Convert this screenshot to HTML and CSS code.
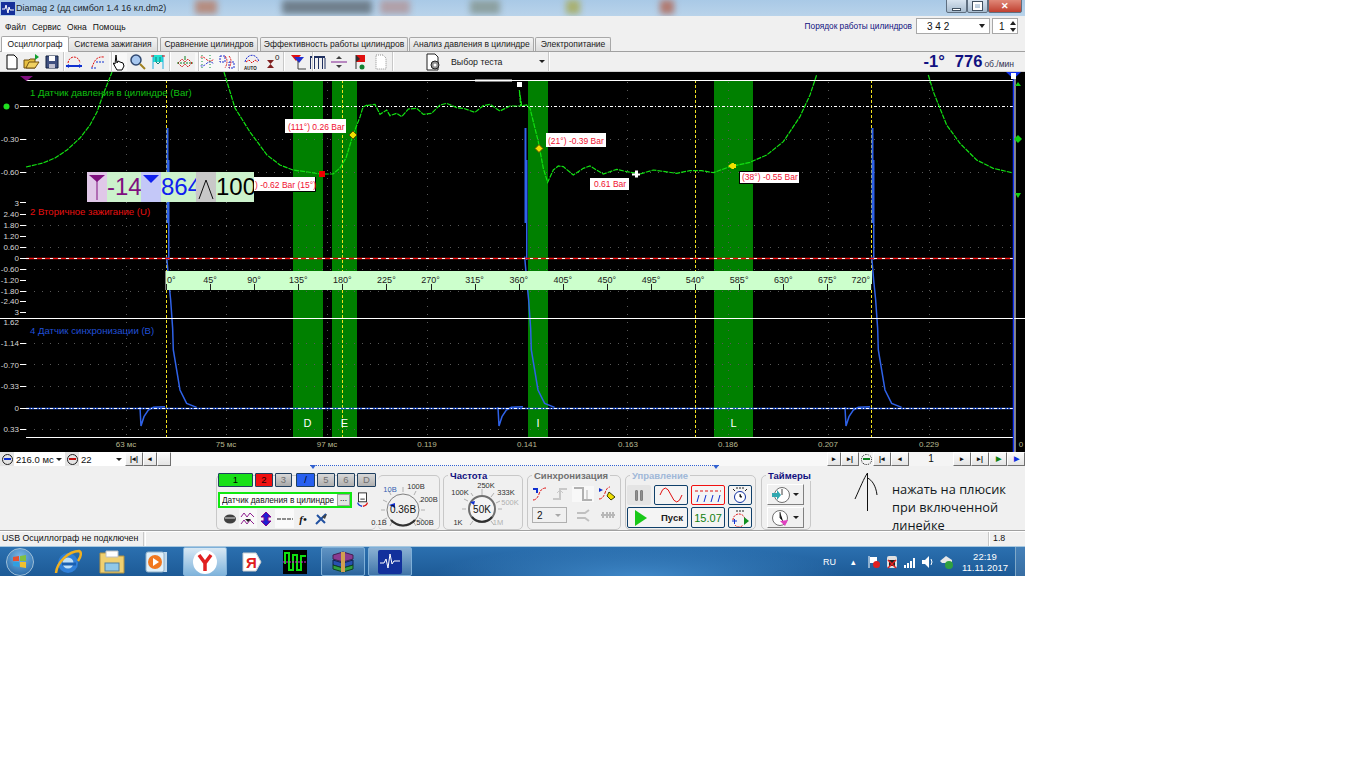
FILE: index.html
```html
<!DOCTYPE html>
<html lang="ru">
<head>
<meta charset="utf-8">
<title>Diamag 2</title>
<link rel="stylesheet" href="styles.css">
</head>
<body>
<div class="app">
  <header class="titlebar">
    <span class="blob b1"></span><span class="blob b2"></span><span class="blob b3"></span><span class="blob b4"></span><span class="blob b5"></span><span class="blob b6"></span>
    <svg class="appicon" width="14" height="13" viewBox="0 0 14 13"><rect width="14" height="13" fill="#14309a"/><path d="M1 7h3l1-4 2 8 1-6 1 3h4" fill="none" stroke="#fff"/></svg>
    <span class="title">Diamag 2 (дд симбол 1.4 16 кл.dm2)</span>
    <div class="winbtns">
      <span class="wb"><i class="wmin"></i></span><span class="wb"><i class="wmax"></i></span><span class="wb wclose">✕</span>
    </div>
  </header>

  <div class="menubar">
    <nav class="menu"><span>Файл</span><span>Сервис</span><span>Окна</span><span>Помощь</span></nav>
    <div class="order">
      <span class="orderlabel">Порядок работы цилиндров</span>
      <span class="combo"><span>3 4 2</span><i class="caret"></i></span>
      <span class="spin"><span>1</span><i class="spinarrows"></i></span>
    </div>
  </div>

  <div class="tabs">
    <span class="tab active">Осциллограф</span>
    <span class="tab t2">Система зажигания</span>
    <span class="tab t3">Сравнение цилиндров</span>
    <span class="tab t4">Эффективность работы цилиндров</span>
    <span class="tab t5">Анализ давления в цилиндре</span>
    <span class="tab t6">Электропитание</span>
  </div>

  <div class="toolbar">
    <div class="tg w20">
      <svg class="ic" viewBox="0 0 18 18"><path d="M4 2h7l3 3v11H4z" fill="#fff" stroke="#000"/></svg>
      <svg class="ic" viewBox="0 0 18 18"><path d="M1 7h5l1-1h5v9H1z" fill="#e8c040" stroke="#705010"/><path d="M3 15l3-6h10l-4 6z" fill="#f0d060" stroke="#705010"/><path d="M12 1l4 3-4 3z" fill="#10a030"/></svg>
      <svg class="ic" viewBox="0 0 18 18"><path d="M3 3h12v12H3z" fill="#405080" stroke="#102040"/><rect x="6" y="3" width="6" height="5" fill="#fff"/><rect x="6" y="11" width="6" height="4" fill="#c0c0d0"/></svg>
    </div>
    <i class="sep"></i>
    <div class="tg w24 ml-3">
      <svg class="ic" viewBox="0 0 18 18"><path d="M3 10C4 2 14 2 15 10" fill="none" stroke="#e01010" stroke-dasharray="2 1"/><path d="M1 13h16" stroke="#1030d0" stroke-width="2"/><path d="M1 13l3-2v4zM17 13l-3-2v4z" fill="#1030d0"/></svg>
      <svg class="ic" viewBox="0 0 18 18"><path d="M3 14C5 10 6 3 15 4" fill="none" stroke="#e01010" stroke-dasharray="2 1"/><path d="M7 9h9" stroke="#1030d0" stroke-dasharray="2 1"/><path d="M2 15h6" stroke="#1030d0" stroke-dasharray="2 1"/></svg>
    </div>
    <i class="sep"></i>
    <div class="tg w20 ml-5">
      <svg class="ic dith" viewBox="0 0 18 18"><path d="M7 2l1 8 1-2 2 1 3 1 1 3-2 4H8L4 10l2 1z" fill="#fff" stroke="#000"/></svg>
      <svg class="ic" viewBox="0 0 18 18"><circle cx="7" cy="7" r="5" fill="#a8c8f0" stroke="#304870" stroke-width="1.5"/><path d="M11 11l5 5" stroke="#a08020" stroke-width="2"/></svg>
      <svg class="ic" viewBox="0 0 18 18"><rect x="4" y="2" width="10" height="7" fill="#20e0d0"/><path d="M4 2v14M14 2v14" stroke="#20b0e0"/><path d="M2 3h3M13 3h3" stroke="#e01010"/><path d="M7 4v5l2 2 2-2V4" stroke="#108080" fill="none"/></svg>
    </div>
    <i class="sep"></i>
    <div class="tg w24 ml2">
      <svg class="ic" viewBox="0 0 18 18"><path d="M2 10l4-4 3 3 3-3 4 4M2 10l4 4 3-3 3 3 4-4" fill="none" stroke="#d02020" stroke-dasharray="2 1"/><path d="M1 10h16" stroke="#108020" stroke-dasharray="2 1"/><path d="M9 3v4" stroke="#108020"/></svg>
    </div>
    <i class="sep"></i>
    <div class="tg w21 dith ml-5">
      <svg class="ic" viewBox="0 0 18 18"><path d="M1 6q4-4 8 0t8 0" fill="none" stroke="#e01010" stroke-dasharray="2 1"/><path d="M1 11q4 4 8 0t8 0" fill="none" stroke="#2030d0" stroke-dasharray="2 1"/><path d="M5 2v14M13 2v14" stroke="#109040" stroke-dasharray="1 2"/></svg>
      <svg class="ic" viewBox="0 0 18 18"><path d="M2 3h5v6H2zM11 9h5v6h-5z" fill="none" stroke="#2030d0" stroke-dasharray="2 1"/><path d="M7 3q4 5 0 12M11 3q4 5 0 12" fill="none" stroke="#e01010" stroke-dasharray="2 1"/></svg>
    </div>
    <i class="sep"></i>
    <div class="tg w20 ml1">
      <svg class="ic" viewBox="0 0 18 18"><path d="M2 9C4 0 14 0 16 9" fill="none" stroke="#2030d0" stroke-dasharray="2 1"/><path d="M3 9l3-2 3 3 3-3 3 2" fill="none" stroke="#e01010" stroke-dasharray="2 1"/><text x="1" y="17" class="auto">AUTO</text></svg>
      <svg class="ic" viewBox="0 0 18 18"><path d="M4 7h7l-3.500 4zM4 15h7l-3.500-4z" fill="#802020"/><text x="12" y="7" class="zero">0</text></svg>
    </div>
    <i class="sep"></i>
    <div class="tg w24 ml2">
      <svg class="ic" viewBox="0 0 18 18"><path d="M1 2h10L6 8z" fill="#e01010"/><path d="M4 4h10L9 10z" fill="#2030d0"/><path d="M8 8v8h8" stroke="#404040" fill="none"/></svg>
    </div>
    <i class="sep"></i>
    <div class="tg w21 ml-6">
      <svg class="ic" viewBox="0 0 18 18"><path d="M1 3h15v2H1z" fill="#203060"/><path d="M1.500 3v13M5.500 5v11M9.500 5v11M13.500 5v11M16 5v11" stroke="#203060"/></svg>
      <svg class="ic" viewBox="0 0 18 18"><path d="M1 9h16" stroke="#802090"/><path d="M6 6h6L9 3z" fill="#404040"/><path d="M6 12h6l-3 3z" fill="#404040"/></svg>
      <svg class="ic" viewBox="0 0 18 18"><path d="M5 2v14" stroke="#303030"/><path d="M5 2h9v7H5z" fill="#e01010"/><path d="M5 2l4 4-4 3z" fill="#303030"/><circle cx="11" cy="14" r="2.500" fill="#108030"/></svg>
      <svg class="ic" viewBox="0 0 18 18"><path d="M4 2h7l3 3v11H4z" fill="#fff" stroke="#909090" stroke-dasharray="1 1"/></svg>
    </div>
    <i class="sep"></i>
    <div class="testpick">
      <svg class="ic" viewBox="0 0 18 18"><path d="M3 1h8l3 3v13H3z" fill="#fff" stroke="#202020"/><circle cx="11" cy="12" r="4" fill="#909090" stroke="#202020"/><circle cx="11" cy="12" r="1.500" fill="#fff"/></svg>
      <span class="testname">Выбор теста</span>
      <i class="caret small"></i>
    </div>
    <i class="sep sep2"></i>
    <div class="rpm"><b>-1°</b><b class="rpmval">776</b><span>об./мин</span></div>
  </div>

  <main class="scope">
    <svg class="scopegfx" width="1025" height="380" viewBox="0 72 1025 380">
      <defs>
        <g id="pulse">
          <rect x="166.500" y="128" width="2" height="95" fill="#2f62e8"/>
          <rect x="168" y="160" width="1.500" height="100" fill="#2f62e8"/>
          <g transform="translate(0 300) scale(.3333)" class="bluetrace">
            <polyline points="500,-130 506,-60 512,0 518,85 520,150 530,210 540,270 560,310 590,322"/>
            <polyline points="420,322 423,378 432,350 445,330 460,322 495,320"/>
          </g>
        </g>
      </defs>
      <g fill="#008000">
        <rect x="293" y="80" width="30" height="357"/>
        <rect x="332" y="80" width="25" height="357"/>
        <rect x="528" y="80" width="20" height="357"/>
        <rect x="714" y="80" width="39" height="357"/>
      </g>
      <g class="griddots">
        <path d="M126.500 82V437M226.500 82V437M327.500 82V437M427.500 82V437M627.500 82V437M728.500 82V437M828.500 82V437M929.500 82V437"/>
        <path d="M26 139.500H1013M26 172.500H1013M26 225.500H1013M26 247.500H1013M26 269.500H1013M26 291.500H1013M26 343.500H1013M26 364.500H1013M26 386.500H1013M26 429.500H1013"/>
      </g>
      <path class="yellowdash" d="M166.500 80V437M342.500 80V437M695.500 80V437M871.500 80V437"/>
      <g>
        <use href="#pulse"/>
        <use href="#pulse" x="358"/>
        <use href="#pulse" x="705"/>
      </g>
      <path d="M26 80.500H1013" stroke="#fff"/>
      <path d="M475 80.500h37" stroke="#fff" stroke-width="2"/>
      <path d="M0 318.500H1025" stroke="#fff"/>
      <path d="M26 437.500H1013" stroke="#fff"/>
      <path d="M26 408.500H1013" stroke="#2f62e8" stroke-width="1.500"/>
      <path class="whitedash" d="M26 408.500H1013M26 106.500H1013"/>
      <path d="M26 258.500H1013" stroke="#f01010" stroke-width="1.500"/>
      <path class="whitedash2" d="M26 258.500H1013"/>
      <g class="greentrace">
        <polyline points="26,167 43,163 55,158 67,150 80,138 90,125 97,112 103,95 112,72"/>
        <polyline points="224,72 235,108 250,132 267,155 280,165 293,170 308,172 320,174 333,174 340,168 346,158 353,135 360,117 363,107 367,105"/>
        <g transform="translate(280 75) scale(.3333)">
          <polyline points="260,92 285,88 300,118 320,105 330,122 350,115 365,125 385,102 410,100 430,118 455,115 480,90 500,85 530,98 550,100 585,112 610,92 630,88 660,108 690,93 722,93 718,45 725,92 740,90 750,100 775,200 790,280 803,322 820,285 835,273 850,275 880,300 910,280 930,273 970,297 1010,283 1040,290 1070,295"/>
        </g>
        <g transform="translate(640 75) scale(.3333)">
          <polyline points="0,297 40,285 75,290 110,295 150,287 185,287 220,293 270,275 330,262 380,240 430,200 480,125 510,60 530,0"/>
          <polyline points="865,0 880,50 920,150 960,205 1010,255 1060,280 1115,293"/>
        </g>
      </g>
      <path d="M1013.500 72V452" stroke="#1030f0" stroke-width="1.500"/>
      <path d="M1015 72V452" stroke="#fff"/>

      <text class="ch cgreen" x="30" y="96">1 Датчик давления в цилиндре (Bar)</text>
      <text class="ch cred" x="30" y="215">2 Вторичное зажигание (U)</text>
      <text class="ch cblue" x="30" y="334">4 Датчик синхронизации (В)</text>

      <g class="ax">
        <text x="19" y="109">0</text><text x="19" y="142">-0.30</text><text x="19" y="175">-0.60</text>
        <text x="19" y="206">3</text><text x="19" y="217">2.40</text><text x="19" y="228">1.80</text><text x="19" y="239">1.20</text><text x="19" y="250">0.60</text><text x="19" y="261">0</text><text x="19" y="272">-0.60</text><text x="19" y="283">-1.20</text><text x="19" y="294">-1.80</text><text x="19" y="304">-2.40</text><text x="19" y="315">3</text>
        <text x="19" y="325">1.62</text><text x="19" y="346">-1.14</text><text x="19" y="368">-0.70</text><text x="19" y="389">-0.33</text><text x="19" y="411">0</text><text x="19" y="432">0.33</text>
      </g>
      <path class="ticks" d="M20 106.500h6M20 139.500h6M20 172.500h6M20 202.500h6M20 214.500h6M20 225.500h6M20 236.500h6M20 247.500h6M20 258.500h6M20 269.500h6M20 280.500h6M20 291.500h6M20 301.500h6M20 312.500h6M20 343.500h6M20 364.500h6M20 386.500h6M20 408.500h6M20 429.500h6"/>

      <g class="time">
        <text x="126" y="447">63 мс</text><text x="226" y="447">75 мс</text><text x="327" y="447">97 мс</text><text x="427" y="447">0.119</text><text x="527" y="447">0.141</text><text x="628" y="447">0.163</text><text x="728" y="447">0.186</text><text x="828" y="447">0.207</text><text x="929" y="447">0.229</text><text x="1021" y="447">0</text>
      </g>
      <g class="bandl">
        <text x="307.500" y="427">D</text><text x="344.500" y="427">E</text><text x="538" y="427">I</text><text x="733.500" y="427">L</text>
      </g>

      <g>
        <path d="M20 76h13l-6.500 5z" fill="#80107f"/>
        <path d="M1006 72h15l-7.500 7z" fill="#1030f0"/>
        <rect x="1011" y="73" width="5" height="6" fill="#fff"/>
        <circle cx="6.500" cy="106.500" r="3" fill="#20e020"/>
        <path d="M1015 86l3-4 3 4z" fill="#10d010"/>
        <path d="M1014 139l4-4 4 4-4 4z" fill="#10d010"/>
        <path d="M1015 193l3 5 3-5z" fill="#10d010"/>
      </g>

      <g>
        <rect x="285" y="119" width="61" height="14" fill="#fff"/>
        <text class="lb" x="288" y="130">(111°) 0.26 Bar</text>
        <rect x="546" y="133" width="60" height="14" fill="#fff"/>
        <text class="lb" x="548" y="144">(21°) -0.39 Bar</text>
        <rect x="590" y="178" width="39" height="12" fill="#fff"/>
        <text class="lb" x="594" y="187">0.61 Bar</text>
        <rect x="739.500" y="171.500" width="60" height="12" fill="#fff" stroke="#000"/>
        <text class="lb" x="742" y="180">(38°) -0.55 Bar</text>
        <rect x="254" y="177" width="61" height="14" fill="#fff"/>
        <path d="M254 191.500h61.500V177" fill="none" stroke="#000"/>
        <text class="lb" x="255" y="188">) -0.62 Bar (15°)</text>
        <path d="M353 131l4 4-4 4-4-4z" fill="#f0e000" stroke="#605000"/>
        <path d="M539 144.500l4 4-4 4-4-4z" fill="#f0e000" stroke="#605000"/>
        <path d="M732 163h2v1h2v4h-2v1h-2l-4-3z" fill="#f0e000"/>
        <rect x="319" y="171" width="6" height="6" fill="#f00000"/>
        <rect x="517" y="82" width="5" height="5" fill="#fff"/>
        <path d="M632 173.500h3v-3h3v3h2v2h-2v2h-3v-2h-3z" fill="#fff"/>
      </g>
    </svg>

    <div class="ruler">
      <span class="deg d0">0°</span><span class="deg">45°</span><span class="deg">90°</span><span class="deg">135°</span><span class="deg">180°</span><span class="deg">225°</span><span class="deg">270°</span><span class="deg">315°</span><span class="deg">360°</span><span class="deg">405°</span><span class="deg">450°</span><span class="deg">495°</span><span class="deg">540°</span><span class="deg">585°</span><span class="deg">630°</span><span class="deg">675°</span><span class="deg dl">720°</span>
    </div>

    <div class="readout">
      <span class="rc plum"><svg width="20" height="30" viewBox="0 0 20 30"><path d="M2 3h16l-8 7z" fill="#80107f"/><path d="M10 8v20" stroke="#80107f"/></svg></span>
      <span class="rv rv1">-14</span>
      <span class="rc lav"><svg width="20" height="30" viewBox="0 0 20 30"><path d="M2 3h16l-8 8z" fill="#1020f0"/></svg></span>
      <span class="rv rv2">864</span>
      <span class="rc gry"><svg width="20" height="30" viewBox="0 0 20 30"><path d="M3 27l7-19 7 19" fill="none" stroke="#101010"/></svg></span>
      <span class="rv rv3">100</span>
    </div>
  </main>

  <div class="hbar">
    <span class="mini"><i class="minus"></i></span>
    <span class="hsel s1">216.0 мс<i class="caret small"></i></span>
    <span class="mini"><i class="minus red"></i></span>
    <span class="hsel s2">22<i class="caret small"></i></span>
    <span class="hb">|◂|</span><span class="hb sm">◂</span><span class="hb sm"></span>
    <span class="track"><i class="trackmark"></i></span>
    <span class="hb sm">▸</span><span class="hb">▸|</span>
    <span class="mini plain"><i class="greenplus"></i></span>
    <span class="hb">|◂</span><span class="hb sm2">◂</span>
    <span class="pageno">1</span>
    <span class="hb sm2">▸</span><span class="hb">▸|</span><span class="hb sm2 gr">▶</span><span class="hb sm2 bl">▶</span>
  </div>

  <section class="panel">
    <div class="group g-ch">
      <div class="chrow">
        <span class="chb c1">1</span><span class="chb c2">2</span><span class="chb c3">3</span><span class="chb c4">/</span><span class="chb c5">5</span><span class="chb c5">6</span><span class="chb c5 cd">D</span>
      </div>
      <div class="chsel">
        <span class="chname"><span>Датчик давления в цилиндре</span><i class="dots">...</i></span>
        <svg width="16" height="16" viewBox="0 0 16 18"><rect x="3" y="1" width="9" height="10" fill="#fff" stroke="#202020"/><path d="M5 8h5" stroke="#202020"/><path d="M2 12a6 5 0 0 0 5 4" fill="none" stroke="#1030d0" stroke-width="1.500"/><path d="M13 12a6 5 0 0 1-5 4" fill="none" stroke="#e01010" stroke-width="1.500"/></svg>
      </div>
      <div class="chtools">
        <span class="ct"><svg width="14" height="12" viewBox="0 0 14 12"><ellipse cx="7" cy="6" rx="6" ry="4.500" fill="#404040"/><path d="M2 5h10" stroke="#e0e0e0"/></svg></span>
        <span class="ct dith"><svg width="16" height="14" viewBox="0 0 16 14"><path d="M1 5l3-4 3 4 3-4 4 4M1 12l3-4 3 4 3-4 4 4" fill="none" stroke="#902090"/><path d="M5 7h6l-3 3z" fill="#202020"/></svg></span>
        <span class="ct"><svg width="14" height="16" viewBox="0 0 14 16"><path d="M7 1l5 5H9v4h3l-5 5-5-5h3V6H2z" fill="#2020d0" stroke="#800090"/></svg></span>
        <span class="ct w"><svg width="16" height="6" viewBox="0 0 16 6"><path d="M0 3h16" stroke="#202020" stroke-dasharray="4 1"/></svg></span>
        <span class="ct it">f•</span>
        <span class="ct"><svg width="14" height="14" viewBox="0 0 14 14"><path d="M2 12L12 2M3 3l8 8" stroke="#2050a0" stroke-width="2"/><path d="M8 5l5-3-2 5" fill="#404040"/></svg></span>
      </div>
    </div>

    <div class="group g-k1">
      <svg width="64" height="54" viewBox="378 476 64 54">
        <g class="tk"><path d="M382 511h4M384 501l4 2M390 492l2 4M404 488v5M417 492l-2 4M424 501l-4 2M426 511h-4M424 521l-4-2M417 527l-3-5M391 527l2-4M384 521l4-2"/></g>
        <circle cx="404" cy="511" r="16" fill="#f0f0f0" stroke="#808080"/>
        <path d="M392 521a16 16 0 0 0 24 0" fill="none" stroke="#303030" stroke-width="2"/>
        <path d="M390 506l6-2v5z" fill="#1030d0"/>
        <text class="kc" x="404" y="514">0.36В</text>
        <text class="kl blue" x="391" y="493">10В</text>
        <text class="kl" x="417" y="490">100В</text>
        <text class="kl" x="430" y="503">200В</text>
        <text class="kl" x="380" y="526">0.1В</text>
        <text class="kl" x="426" y="526">500В</text>
      </svg>
    </div>

    <div class="group g-k2">
      <span class="legend navy">Частота</span>
      <svg width="80" height="54" viewBox="443 476 80 54">
        <g class="tk"><path d="M462 510h4M464 500l4 2M471 494l2 3M482 490v6M494 494l-3 4M500 502l-4 2M502 510h-4M494 526l-3-4M470 526l3-4"/></g>
        <circle cx="482" cy="510" r="13" fill="#f4f4f4" stroke="#707070" stroke-width="2"/>
        <path d="M472 518a13 13 0 0 0 20 0" fill="none" stroke="#303030" stroke-width="2"/>
        <path d="M470 503l5-1-1 4z" fill="#1030d0"/>
        <text class="kc" x="482" y="514">50K</text>
        <text class="kl" x="460" y="496">100K</text>
        <text class="kl" x="486" y="489">250K</text>
        <text class="kl" x="506" y="496">333K</text>
        <text class="kl lg" x="510" y="506">500K</text>
        <text class="kl" x="458" y="526">1K</text>
        <text class="kl lg" x="498" y="526">1M</text>
      </svg>
    </div>

    <div class="group g-sync">
      <span class="legend grey">Синхронизация</span>
      <div class="srow">
        <svg width="16" height="14" viewBox="0 0 16 14"><path d="M1 13q4 0 6-6t7-6" fill="none" stroke="#e01010" stroke-dasharray="3 1"/><path d="M1 2h4v4" fill="none" stroke="#1030d0" stroke-width="2"/></svg>
        <svg width="16" height="14" viewBox="0 0 16 14"><path d="M1 12h7V2h7" fill="none" stroke="#c8c8c8" stroke-width="2"/><path d="M5 6l3-3 3 3" fill="none" stroke="#c8c8c8"/></svg>
        <svg class="dith" width="22" height="16" viewBox="0 0 22 16"><path d="M2 2h9v12h9" fill="none" stroke="#b0b0b0" stroke-width="2"/><path d="M15 4v10" stroke="#b0b0b0"/></svg>
        <svg width="18" height="16" viewBox="0 0 18 16"><path d="M1 13q4 0 6-6t5-6" fill="none" stroke="#e01010" stroke-dasharray="3 1"/><path d="M1 2l4 2-4 2z" fill="#1030d0"/><path d="M11 6l6 5-4 3-4-4z" fill="#f0e000" stroke="#404000"/></svg>
      </div>
      <div class="srow r2">
        <span class="syncsel">2<i class="caret small dis"></i></span>
        <svg width="16" height="14" viewBox="0 0 16 14"><path d="M1 5h8l4-3M1 10h8l4 3" fill="none" stroke="#c0c0c0" stroke-width="2"/></svg>
        <svg width="16" height="10" viewBox="0 0 16 10"><path d="M1 5h14M3 2v6M7 2v6M10 2v6M13 2v6" stroke="#b8b8b8" stroke-width="2"/></svg>
      </div>
    </div>

    <div class="group g-ctl">
      <span class="legend lblue">Управление</span>
      <div class="cgrid">
        <span class="cbtn pause"><i></i><i></i></span>
        <span class="cbtn sine"><svg width="24" height="16" viewBox="0 0 24 16"><path d="M1 8q5-14 11 0t11 0" fill="none" stroke="#e01010"/></svg></span>
        <span class="cbtn pulse"><svg width="28" height="16" viewBox="0 0 28 16"><path d="M1 4h26" stroke="#e01010" stroke-dasharray="3 2"/><path d="M3 15l2-7M10 15l2-7M17 15l2-7M24 15l2-7" stroke="#1030d0"/></svg></span>
        <span class="cbtn clock"><svg width="18" height="18" viewBox="0 0 18 18"><circle cx="9" cy="11" r="5.500" fill="#fff" stroke="#1030a0"/><path d="M2 3l2 2M16 3l-2 2M9 8v3h2" stroke="#202020"/><path d="M5 2h8" stroke="#202020" stroke-dasharray="2 1"/></svg></span>
        <span class="cbtn start"><svg width="12" height="16" viewBox="0 0 12 16"><path d="M0 0l12 8L0 16z" fill="#18c818"/></svg><b>Пуск</b></span>
        <span class="cbtn timeval">15.07</span>
        <span class="cbtn clock"><svg width="18" height="18" viewBox="0 0 18 18"><path d="M5 2h8" stroke="#202020" stroke-dasharray="2 1"/><path d="M2 11a6 6 0 0 1 12 0M4 16a5 5 0 0 0 8 0" fill="none" stroke="#e01010" stroke-dasharray="2 1"/><path d="M1 12h5M3.500 10v5" stroke="#1030d0"/><path d="M13 8l5 4-5 4z" fill="#109020"/></svg></span>
      </div>
    </div>

    <div class="group g-tm">
      <span class="legend navy">Таймеры</span>
      <span class="tmb"><svg width="20" height="18" viewBox="0 0 20 18"><circle cx="11" cy="9" r="7.500" fill="#fff" stroke="#707070"/><path d="M11 3v6" stroke="#404040"/><path d="M1 7h5V4l4 5-4 5v-3H1z" fill="#30a8b0"/></svg><i class="caret small"></i></span>
      <span class="tmb"><svg width="20" height="18" viewBox="0 0 20 18"><circle cx="9" cy="9" r="7.500" fill="#fff" stroke="#707070"/><path d="M9 3v6l3 3" stroke="#404040"/><path d="M9 12l8-1-3 6z" fill="#e040c0"/></svg><i class="caret small"></i></span>
    </div>

    <div class="note">
      <svg width="34" height="42" viewBox="0 0 34 42"><path d="M16.500 1v38M16.500 1C13 6 9 16 4 27M16.500 6C21 8 25 14 26 23" fill="none" stroke="#101010"/></svg>
      <p>нажать на плюсик<br>при включенной<br>линейке</p>
    </div>
  </section>

  <footer class="status">
    <span class="st1">USB Осциллограф не подключен</span>
    <span class="st2"></span>
    <span class="st3">1.8</span>
  </footer>

  <div class="taskbar">
    <span class="orb"><svg width="20" height="20" viewBox="0 0 20 20"><path d="M3 5l6-1v5H3z" fill="#e85030"/><path d="M10 4l6-1v6h-6z" fill="#80c040"/><path d="M3 10h6v5l-6-1z" fill="#30a0e0"/><path d="M10 10h6v6l-6-1z" fill="#f0c030"/></svg></span>
    <span class="tapp ie"><svg width="30" height="28" viewBox="0 0 30 28"><circle cx="15" cy="15" r="10" fill="#2f7fd8"/><circle cx="15" cy="15" r="5.500" fill="#bfe0f8"/><path d="M9 16h14" stroke="#1a5fb0" stroke-width="3"/><path d="M3 25C4 14 16 3 26 3c3 1 2 6-1 10" fill="none" stroke="#f0b020" stroke-width="2.500"/></svg></span>
    <span class="tapp fold"><svg width="28" height="26" viewBox="0 0 28 26"><path d="M2 4h10l2 3h12v17H2z" fill="#f0d070" stroke="#b09040"/><path d="M8 2h12v6H8z" fill="#fff" stroke="#c0c0c0"/><rect x="7" y="14" width="14" height="8" fill="#90c8e8" stroke="#5080a0"/></svg></span>
    <span class="tapp play"><svg width="26" height="26" viewBox="0 0 26 26"><rect x="14" y="3" width="10" height="20" fill="#c0d8ec"/><rect x="3" y="3" width="18" height="20" rx="2" fill="#e0f0fa" stroke="#90b0c8"/><circle cx="12" cy="13" r="7" fill="#f07820"/><path d="M10 9l6 4-6 4z" fill="#fff"/></svg></span>
    <span class="tapp tbtn yb active"><svg width="26" height="26" viewBox="0 0 26 26"><circle cx="13" cy="13" r="12" fill="#fff"/><path d="M7 6l6 8 6-8M13 14v8" fill="none" stroke="#e02020" stroke-width="3.500"/></svg></span>
    <span class="tapp yab"><svg width="22" height="22" viewBox="0 0 22 22"><path d="M2 2h13l5 9-5 9H2z" fill="#fff" stroke="#d0d0d0"/><text x="5" y="17" class="ya">Я</text></svg></span>
    <span class="tapp scopeapp"><svg width="24" height="24" viewBox="0 0 24 24"><rect width="24" height="24" fill="#000"/><path d="M2 14V3h4v17h4V5h4v15h4V6h5" fill="none" stroke="#10e010" stroke-width="2"/><path d="M0 12h24" stroke="#e020e0" stroke-dasharray="2 1"/></svg></span>
    <span class="tapp tbtn rar"><svg width="26" height="24" viewBox="0 0 26 24"><path d="M3 5l10-3 10 3v4L13 12 3 9z" fill="#8a3a90" stroke="#402050"/><path d="M3 10l10 3 10-3v5l-10 3-10-3z" fill="#2850b0" stroke="#102050"/><path d="M3 15l10 3 10-3v4l-10 3-10-3z" fill="#30a040" stroke="#104020"/><path d="M11 2h4v20h-4z" fill="#d0a050"/></svg></span>
    <span class="tapp tbtn dia"><svg width="24" height="24" viewBox="0 0 24 24"><rect width="24" height="24" rx="2" fill="#12309c"/><path d="M2 13h4l2-4 2 9 2-14 2 10 2-3h6" fill="none" stroke="#fff"/></svg></span>
    <div class="tray">
      <span class="lang">RU</span>
      <span class="up">▴</span>
      <svg width="14" height="14" viewBox="0 0 14 14"><path d="M2 1v12" stroke="#fff"/><path d="M3 2h7v6H3z" fill="#fff"/><circle cx="9.500" cy="9.500" r="3.500" fill="#e02020"/></svg>
      <svg width="14" height="14" viewBox="0 0 14 14"><rect x="2" y="1" width="10" height="12" rx="2" fill="#e0e0e0"/><rect x="4" y="5" width="6" height="6" fill="#202020"/><path d="M3 13l8-8M3 5l8 8" stroke="#e02020" stroke-width="1.500"/></svg>
      <svg width="14" height="12" viewBox="0 0 14 12"><path d="M1 9h2v3H1zM4 7h2v5H4zM7 5h2v7H7zM10 2h2v10h-2z" fill="#fff"/></svg>
      <svg width="14" height="14" viewBox="0 0 14 14"><path d="M1 5h3l4-4v12L4 9H1z" fill="#fff"/><path d="M10 4q2 3 0 6" fill="none" stroke="#fff"/></svg>
      <svg width="16" height="14" viewBox="0 0 16 14"><path d="M1 6l6-5 6 4v3H3z" fill="#e8e8e8"/><circle cx="10" cy="10" r="4" fill="#30a040"/></svg>
      <div class="clocktxt"><span>22:19</span><span>11.11.2017</span></div>
      <span class="showdesk"></span>
    </div>
  </div>
</div>
</body>
</html>
```
FILE: styles.css
```css
* { box-sizing: border-box; }
html, body { margin: 0; padding: 0; background: #fff; }
body { font-family: "Liberation Sans", Arial, sans-serif; font-size: 10px; color: #101010; }
i { display: inline-block; font-style: normal; }

.app { width: 1025px; height: 576px; display: flex; flex-direction: column; overflow: hidden; background: #f0f0f0; }

/* title bar */
.titlebar { height: 16px; flex: none; display: flex; align-items: center; padding-left: 1px; gap: 1px; position: relative; overflow: hidden;
  background: linear-gradient(#a9c9e6, #b9d3ea); }
.blob { position: absolute; top: 0; height: 14px; filter: blur(3px); }
.b1 { left: 195px; width: 22px; background: #b58d80; }
.b2 { left: 282px; width: 90px; background: #6f7f8c; }
.b3 { left: 380px; width: 30px; background: #b0a0a8; }
.b4 { left: 470px; width: 30px; background: #8ca0a0; }
.b5 { left: 566px; width: 14px; background: #a8b070; }
.b6 { left: 660px; width: 14px; background: #b07a70; }
.appicon { position: relative; }
.title { position: relative; font-size: 9px; color: #202830; }
.winbtns { position: absolute; right: 3px; top: -1px; display: flex; height: 14px; }
.wb { width: 21px; border: 1px solid #5f6f80; background: linear-gradient(#d8e4f0, #a8bccf); display: flex; align-items: center; justify-content: center; border-radius: 0 0 2px 2px; color: #fff; }
.wclose { width: 34px; background: linear-gradient(#e08878, #c04030); font-size: 9px; font-weight: bold; }
.wmin { width: 9px; height: 3px; background: #fff; border: 1px solid #405060; margin-top: 6px; }
.wmax { width: 9px; height: 8px; border: 2px solid #fff; outline: 1px solid #405060; }

/* menu */
.menubar { height: 20px; flex: none; display: flex; align-items: center; justify-content: space-between; padding: 0 7px 0 5px; }
.menu { display: flex; gap: 6px; font-size: 8.500px; margin-top: 1px; }
.order { display: flex; align-items: center; }
.orderlabel { color: #101080; font-size: 8.300px; margin-right: 4px; }
.combo { width: 74px; height: 16px; background: #fff; border: 1px solid #a8a8a8; display: flex; justify-content: space-between; align-items: center; padding: 0 4px 0 10px; font-size: 10px; }
.spin { width: 26px; height: 16px; margin-left: 2px; background: #fff; border: 1px solid #a8a8a8; display: flex; justify-content: space-between; align-items: center; padding: 0 4px 0 6px; font-size: 10px; }
.spinarrows { width: 0; height: 11px; position: relative; }
.spinarrows::before, .spinarrows::after { content: ""; position: absolute; left: -3px; border-left: 3px solid transparent; border-right: 3px solid transparent; }
.spinarrows::before { top: 0; border-bottom: 4px solid #202020; }
.spinarrows::after { bottom: 0; border-top: 4px solid #202020; }
.caret { width: 0; height: 0; border-left: 3.500px solid transparent; border-right: 3.500px solid transparent; border-top: 4px solid #202020; }
.caret.small { border-left-width: 3px; border-right-width: 3px; border-top-width: 3px; }
.caret.dis { border-top-color: #a8a8a8; }

/* tabs */
.tabs { height: 16px; flex: none; display: flex; align-items: flex-end; padding-left: 1px; border-bottom: 1px solid #a0a0a0; }
.tab { height: 14px; border: 1px solid #a8a8a8; border-bottom: 0; background: linear-gradient(#f4f4f4, #dcdcdc); font-size: 8.500px; line-height: 13px; text-align: center; white-space: nowrap; overflow: hidden; border-radius: 2px 2px 0 0; color: #202020; }
.tab.active { width: 68px; height: 16px; background: #fff; line-height: 14px; margin-bottom: -1px; }
.t2 { width: 89px; border-left: 0; }
.t3 { width: 98px; margin-left: 2px; }
.t4 { width: 148px; margin-left: 2px; }
.t5 { width: 125px; margin-left: 1px; }
.t6 { width: 76px; margin-left: 1px; }

/* toolbar */
.toolbar { height: 20px; flex: none; display: flex; align-items: center; padding-left: 2px; border-bottom: 1px solid #d0d0d0; }
.tg { display: flex; align-items: center; flex: none; }
.tg .ic { display: block; }
.ic { width: 18px; height: 18px; flex: none; }
.w20 .ic { margin: 0 1px; }
.w24 .ic { margin: 0 3px; }
.w21 .ic { margin: 0 1.500px; }
.ml-3 { margin-left: -3px; }
.ml-5 { margin-left: -5px; }
.ml-6 { margin-left: -6.500px; }
.ml1 { margin-left: 1.500px; }
.ml2 { margin-left: 2px; }
.sep { width: 1px; height: 19px; background: #c8c8c8; margin: 0 1px; box-shadow: 1px 0 #fff; flex: none; position: relative; }
.dith { background-color: #f8f8f8; background-image: radial-gradient(#d8d8d8 .6px, transparent .7px); background-size: 2px 2px; }
.testpick { display: flex; align-items: center; margin-left: 30px; width: 124px; gap: 5px; flex: none; }
.testname { font-size: 8.800px; width: 83px; margin-left: 4px; color: #202020; flex: none; }
.sep2 { margin-left: 0; }
.rpm { margin-left: auto; margin-right: 11px; display: flex; align-items: baseline; color: #101080; }
.rpm b { font-size: 16.500px; }
.rpmval { margin-left: 10px; }
.rpm span { font-size: 8.500px; margin-left: 2px; color: #303050; }

/* scope */
.scope { height: 380px; flex: none; position: relative; background: #000; overflow: hidden; }
.scopegfx { display: block; }
.griddots { fill: none; stroke: #585858; stroke-dasharray: 1 7; }
.yellowdash { fill: none; stroke: #f0e020; stroke-dasharray: 3 2; }
.whitedash { fill: none; stroke: #fff; stroke-dasharray: 3 2 1 2; }
.whitedash2 { fill: none; stroke: #fff; stroke-dasharray: 3 5; }
.ticks { stroke: #fff; fill: none; }
.greentrace polyline { fill: none; stroke: #12e012; stroke-width: 1.200; stroke-dasharray: 5 1; vector-effect: non-scaling-stroke; }
.bluetrace polyline { fill: none; stroke: #2f62e8; stroke-width: 1.500; vector-effect: non-scaling-stroke; }
.ch { font: 9.600px "Liberation Sans", sans-serif; }
.cgreen { fill: #10c010; }
.cred { fill: #e81010; }
.cblue { fill: #2050d8; }
.ax text { font: 8px "Liberation Sans", sans-serif; fill: #d8d8d8; text-anchor: end; }
.time text { font: 8px "Liberation Sans", sans-serif; fill: #b8b890; text-anchor: middle; }
.bandl text { font: 11px "Liberation Sans", sans-serif; fill: #fff; text-anchor: middle; }
.lb { font: 8.500px "Liberation Sans", sans-serif; fill: #f01030; }

.ruler { position: absolute; left: 165px; top: 199px; width: 707px; height: 19px; background: #ccffcc; border-left: 1px solid #808080; display: flex; }
.deg { width: 44.100px; font-size: 9px; color: #202020; line-height: 19px; white-space: nowrap; text-align: center; position: relative; flex: none; }
.deg::after { content: ""; position: absolute; left: 50%; bottom: 0; width: 1px; height: 6px; background: #202020; }
.d0 { width: 22px; text-align: left; padding-left: 1px; }
.d0::after { left: 0; }
.dl { width: 23px; }
.dl::after { left: auto; right: 0; }

.readout { position: absolute; left: 87px; top: 100px; height: 30px; display: flex; background: #ccf2cc; overflow: hidden; }
.rc { width: 20px; height: 30px; flex: none; display: block; }
.plum { background: #e0c8e8; }
.lav { background: #c4c8f8; }
.gry { background: #c8c8c8; }
.rv { font-size: 24px; line-height: 30px; overflow: hidden; white-space: nowrap; flex: none; }
.rv1 { width: 34px; color: #80107f; }
.rv2 { width: 35px; color: #1020f0; }
.rv3 { width: 38px; color: #000; }

/* horizontal strip */
.hbar { height: 14px; flex: none; display: flex; align-items: stretch; background: #f4f4f4; font-size: 9.500px; }
.mini { width: 14px; background: #e4e4e4; display: flex; align-items: center; justify-content: center; flex: none; }
.mini.plain { background: transparent; }
.minus { width: 11px; height: 11px; border: 1px solid #202020; border-radius: 50%; background: linear-gradient(#1030d0, #1030d0) center / 7px 2px no-repeat; }
.minus.red { background: linear-gradient(#c01010, #c01010) center / 7px 2px no-repeat; }
.greenplus { width: 11px; height: 11px; border: 1px dotted #202020; border-radius: 50%; background: linear-gradient(#108020, #108020) center / 7px 2px no-repeat; }
.hsel { background: #fff; display: flex; justify-content: space-between; align-items: center; padding: 0 3px 0 2px; flex: none; }
.s1 { width: 51px; }
.s2 { width: 46px; }
.hb { width: 18px; background: linear-gradient(#fafafa, #e4e4e4); border: 1px solid #fff; border-right-color: #707070; border-bottom-color: #707070; font-size: 7px; font-weight: bold; line-height: 11px; text-align: center; flex: none; overflow: hidden; color: #101010; }
.hb.sm { width: 14px; }
.hb.sm2 { width: 18px; }
.hb.gr { color: #108010; }
.hb.bl { color: #1030e0; }
.track { flex: 1; background-color: #f8f8f8; background-image: radial-gradient(#d8d8d8 .6px, transparent .7px); background-size: 2px 2px; position: relative; }
.trackmark { position: absolute; left: 139px; top: 13px; width: 409px; height: 1px; border-top: 1px dotted #3060d0; }
.trackmark::before, .trackmark::after { content: ""; position: absolute; top: -1px; border-left: 3px solid transparent; border-right: 3px solid transparent; border-top: 4px solid #3060d0; }
.trackmark::before { left: 0; }
.trackmark::after { right: 0; }
.pageno { width: 44px; text-align: center; font-size: 10px; line-height: 14px; flex: none; }

/* control panel */
.panel { height: 65px; flex: none; display: flex; align-items: flex-start; padding: 9px 0 0 216px; position: relative; border-bottom: 1px solid #a0a0a0; }
.group { border: 1px solid #c8c8c8; border-radius: 5px; height: 55px; position: relative; flex: none; }
.legend { position: absolute; top: -6px; left: 4px; background: #f0f0f0; padding: 0 2px; font-size: 9.500px; font-weight: bold; line-height: 11px; white-space: nowrap; }
.navy { color: #101080; }
.grey { color: #707070; }
.lblue { color: #a0b8d8; }

.g-ch { width: 160px; border-right: 0; padding-left: 1px; }
.chrow { display: flex; gap: 2px; height: 14px; margin-top: -3px; position: relative; }
.chb { width: 18px; height: 14px; border: 1px solid #204060; border-radius: 1px; font-size: 9.500px; line-height: 12px; text-align: center; background: #b8b8b8; color: #707070; flex: none; }
.c1 { width: 35px; background: #18e018; color: #000; }
.c2 { background: #f01010; color: #200000; }
.c3 { width: 17px; background: linear-gradient(#d8d8d8, #a8a8a8); }
.c4 { width: 19px; margin-left: 2px; background: #2860f0; color: #000; }
.c5 { background: linear-gradient(#d8d8d8, #b0b0b0); }
.cd { width: 19px; }
.chsel { display: flex; align-items: center; gap: 3px; margin-top: 5px; height: 16px; }
.chname { width: 134px; height: 16px; border: 2px solid #10e810; background: #fff; display: flex; justify-content: space-between; align-items: center; padding-left: 2px; font-size: 8.300px; white-space: nowrap; overflow: hidden; flex: none; }
.chname span { overflow: hidden; }
.dots { width: 13px; height: 12px; background: #e4e4e4; border: 1px solid #a0a0a0; line-height: 6px; text-align: center; flex: none; margin-left: 1px; }
.chtools { display: flex; margin-top: 1px; margin-left: 3px; height: 19px; }
.ct { width: 18px; height: 19px; display: flex; align-items: center; justify-content: center; flex: none; }
.ct.w { background: #fafafa; width: 19px; }
.ct.it { font: italic bold 11px "Liberation Serif", serif; }

.g-k1 { width: 62px; margin-left: 2px; border-left: 0; }
.g-k2 { width: 80px; margin-left: 3px; }
.g-k1 svg, .g-k2 svg { display: block; margin: -1px 0 0 -1px; overflow: visible; }
.tk path { stroke: #b0b0b0; fill: none; }
.kc { font: 10px "Liberation Sans", sans-serif; fill: #101010; text-anchor: middle; }
.kl { font: 7.500px "Liberation Sans", sans-serif; fill: #303030; text-anchor: middle; }
.kl.blue { fill: #3060b0; }
.kl.lg { fill: #b0b0b0; }

.g-sync { width: 94px; margin-left: 4px; padding: 10px 4px 0 4px; }
.srow { display: flex; align-items: center; justify-content: space-between; height: 16px; }
.srow.r2 { margin-top: 5px; gap: 4px; }
.syncsel { width: 35px; height: 16px; border: 1px solid #b0b0b0; display: flex; justify-content: space-between; align-items: center; padding: 0 5px 0 4px; font-size: 10px; flex: none; }

.g-ctl { width: 131px; margin-left: 4px; padding: 9px 0 0 1px; }
.cgrid { display: grid; grid-template-columns: 24px 34px 34px 24px; grid-template-rows: 20px 21px; gap: 2px 3px; }
.cbtn { border: 1px solid #10406a; border-radius: 2px; background: #f4f4f4; display: flex; align-items: center; justify-content: center; }
.pause { background: #e4e4e4; border: 0; gap: 2px; }
.pause i { width: 3px; height: 11px; background: #909090; border: 1px solid #808080; border-radius: 1px; }
.pulse { border-color: #f01010; }
.start { grid-column: 1 / span 2; justify-content: flex-start; padding-left: 7px; gap: 14px; }
.start b { font-size: 9.500px; color: #202020; }
.timeval { color: #108010; font-size: 11px; }

.g-tm { width: 50px; margin-left: 5px; padding: 8px 0 0 5px; }
.tmb { width: 37px; height: 21px; margin-bottom: 2px; border: 1px solid #808080; border-top-color: #fff; border-left-color: #fff; background: #f0f0f0; display: flex; align-items: center; gap: 2px; padding-left: 3px; }

.note { position: absolute; left: 851px; top: 6px; display: flex; }
.note p { margin: 8px 0 0 7px; font: 12.800px/18px "Open Sans", sans-serif; color: #101820; height: 52px; overflow: hidden; white-space: nowrap; }

/* status */
.status { height: 15px; flex: none; display: flex; border-top: 1px solid #fff; font-size: 8.800px; line-height: 13px; }
.st1 { width: 144px; padding-left: 2px; border-right: 1px solid #c8c8c8; overflow: hidden; white-space: nowrap; flex: none; }
.st2 { flex: 1; border-right: 1px solid #c8c8c8; margin-left: 1px; border-left: 1px solid #fff; }
.st3 { width: 36px; padding-left: 3px; border-left: 1px solid #fff; }

/* taskbar */
.taskbar { height: 30px; flex: none; display: flex; align-items: center; position: relative; background: radial-gradient(ellipse 260px 40px at 640px 30px, #3f88c8 0%, transparent 80%), linear-gradient(#2b70b0, #1d5a96); border-top: 1px solid #a8c8e0; }
.orb { width: 28px; height: 28px; border-radius: 50%; margin-left: 6px; background: radial-gradient(circle at 50% 30%, #7ab8e8, #1c5c9c); border: 1px solid #a0c0d8; display: flex; align-items: center; justify-content: center; flex: none; }
.tapp { display: flex; align-items: center; justify-content: center; flex: none; height: 29px; }
.ie { width: 44px; margin-left: 12px; }
.fold { width: 44px; }
.play { width: 44px; }
.tbtn { width: 44px; border: 1px solid #7fb0d8; border-radius: 2px; background: linear-gradient(rgba(255,255,255,.25), rgba(255,255,255,.06)); }
.yb { margin-left: 5px; background: linear-gradient(#d8e8f4, #7fb4dc); }
.yab { width: 44px; margin-left: 3px; }
.scopeapp { width: 24px; margin-left: 9px; }
.rar { margin-left: 14px; }
.dia { margin-left: 3px; background: linear-gradient(rgba(255,255,255,.45), rgba(255,255,255,.15)); }
.ya { font: bold 15px "Liberation Sans", sans-serif; fill: #e02020; }
.tray { position: absolute; right: 0; top: 0; height: 29px; display: flex; align-items: center; gap: 4px; color: #fff; }
.lang { font-size: 9px; margin-right: 11px; }
.up { font-size: 9px; margin-right: 7px; }
.clocktxt { display: flex; flex-direction: column; align-items: center; width: 48px; font-size: 9.500px; line-height: 11px; margin-left: 2px; }
.showdesk { width: 10px; height: 29px; margin-left: 2px; border-left: 1px solid #7fa8c8; background: rgba(255,255,255,.12); }
.auto { font: bold 4.500px "Liberation Sans", sans-serif; fill: #101010; }
.zero { font: 8px "Liberation Sans", sans-serif; fill: #202020; }
```
